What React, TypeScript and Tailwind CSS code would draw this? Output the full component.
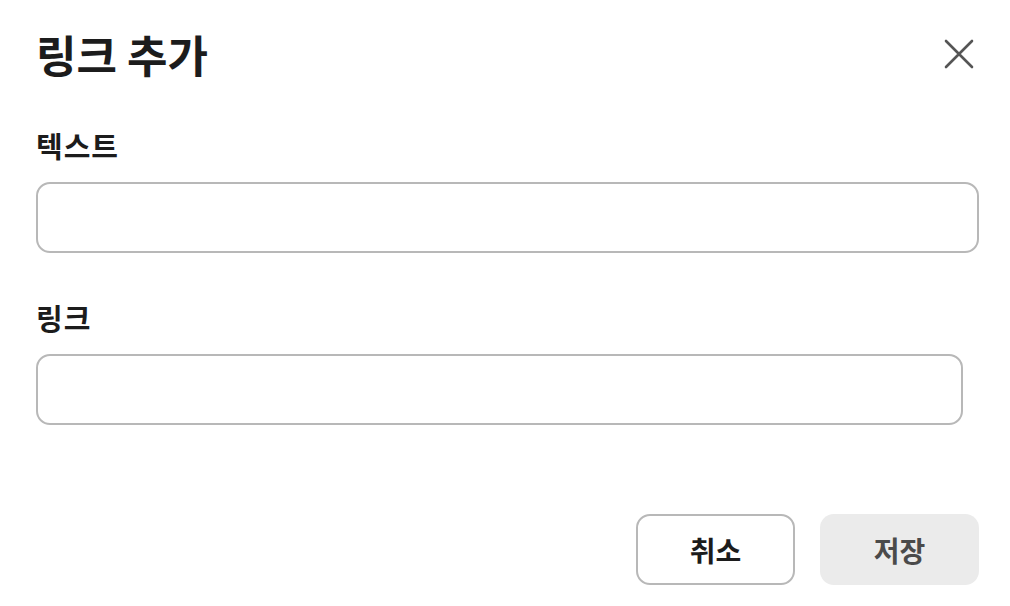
export default function App() {
  return (
    <div
      className="w-[1010px] h-[606px] bg-white pl-[36px] pr-[31px] pt-[30px] text-[#1c1c1c]"
      style={{ fontFamily: '"Noto Sans CJK KR", "Noto Sans", sans-serif' }}
    >
      <div className="flex items-center justify-between h-[48px]">
        <h1 className="text-[44px] leading-[48px] font-bold">링크 추가</h1>
        <button className="mr-[4px] w-[32px] h-[32px] flex items-center justify-center text-[#555]">
          <svg width="30" height="30" viewBox="0 0 30 30" fill="none" stroke="currentColor" strokeWidth="2.6" strokeLinecap="round">
            <path d="M2 2 L28 28 M28 2 L2 28" />
          </svg>
        </button>
      </div>

      <label className="block mt-[51px] text-[29px] leading-[32px] font-bold tracking-[1px]">텍스트</label>
      <input className="block mt-[21px] w-full h-[71px] border-2 border-[#b8b8b8] rounded-[14px] px-4 outline-none" />

      <label className="block mt-[48px] text-[29px] leading-[32px] font-bold tracking-[1px]">링크</label>
      <input className="block mt-[21px] w-[927px] h-[71px] border-2 border-[#b8b8b8] rounded-[14px] px-4 outline-none" />

      <div className="mt-[89px] flex justify-end gap-[25px]">
        <button className="w-[159px] h-[71px] border-2 border-[#b8b8b8] rounded-[14px] bg-white text-[28px] font-bold text-[#1c1c1c]">
          취소
        </button>
        <button className="w-[159px] h-[71px] rounded-[14px] bg-[#ebebeb] text-[28px] font-bold text-[#4a4a4a]">
          저장
        </button>
      </div>
    </div>
  );
}
